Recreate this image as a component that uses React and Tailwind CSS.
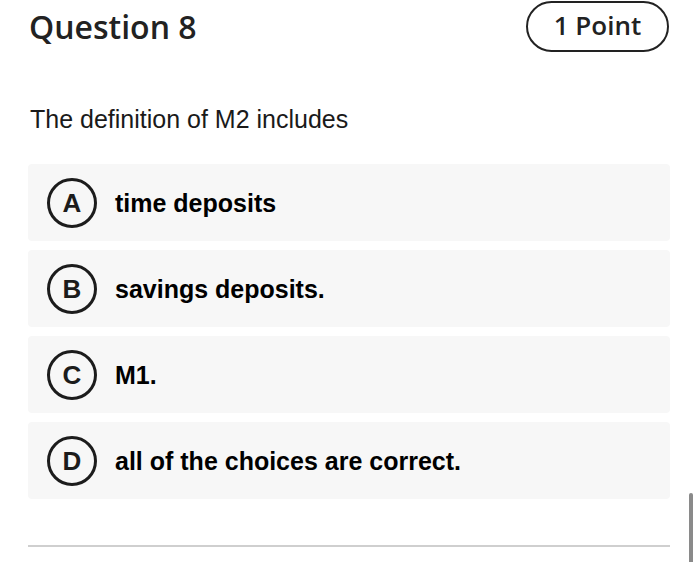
const choices = [
  { letter: "A", text: "time deposits" },
  { letter: "B", text: "savings deposits." },
  { letter: "C", text: "M1." },
  { letter: "D", text: "all of the choices are correct." },
];

const Choice = ({ letter, text }) => {
  return (
    <div className="flex h-[77px] items-center gap-[18px] rounded-[4px] bg-[#f7f7f7] pl-[19px]">
      <div className="flex h-[50px] w-[50px] shrink-0 items-center justify-center rounded-full border-[3px] border-[#1c1c1c]">
        <span className="font-['Liberation_Sans',Arial,sans-serif] text-[26px] leading-none font-bold text-[#1c1c1c]">
          {letter}
        </span>
      </div>
      <span className="mt-[3px] font-['Liberation_Sans',Arial,sans-serif] text-[25px] font-bold text-black">
        {text}
      </span>
    </div>
  );
};

export default function App() {
  return (
    <div className="relative h-[562px] w-[700px] overflow-hidden bg-white">
      <div className="pl-[28px] pr-[30px] pt-[1px]">
        {/* Header */}
        <div className="flex h-[51px] items-center justify-between">
          <h1 className="pl-[1px] font-['Open_Sans',sans-serif] text-[32px] font-semibold leading-[44px] text-[#222]">
            Question 8
          </h1>
          <div className="mr-[1px] flex h-[51px] w-[143px] items-center justify-center rounded-full border-2 border-[#222] font-['Open_Sans',sans-serif] text-[26px] font-semibold text-[#222]">
            <span className="-mt-[2px]">1 Point</span>
          </div>
        </div>

        {/* Question */}
        <p className="mt-[52px] pl-[2px] font-['Liberation_Sans',Arial,sans-serif] text-[25px] leading-[30px] text-[#1a1a1a]">
          The definition of M2 includes
        </p>

        {/* Choices */}
        <div className="mt-[30px] flex flex-col gap-[9px]">
          {choices.map((c) => (
            <Choice key={c.letter} letter={c.letter} text={c.text} />
          ))}
        </div>

        <div className="mt-[46px] h-[2px] bg-[#cfcfcf]" />
      </div>

      {/* Scrollbar */}
      <div className="absolute right-[7px] top-[493px] h-[80px] w-[4px] rounded-full bg-[#8a8a8a]" />
    </div>
  );
}
